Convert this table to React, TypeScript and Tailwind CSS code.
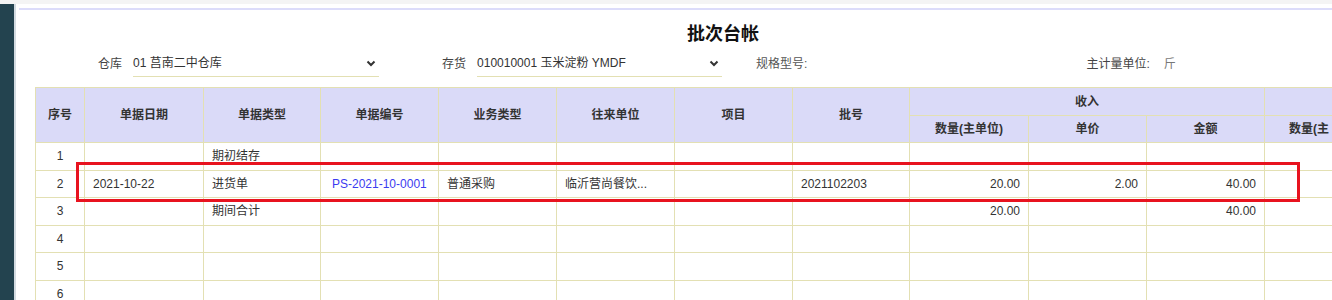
import React from 'react';

const cols = [49, 119, 117, 118, 118, 118, 118, 117, 119, 118, 118, 118, 118, 118];

const font = { fontFamily: '"Liberation Sans", "Noto Sans CJK SC", sans-serif' };

type Row = {
  no: number;
  date?: string;
  type?: string;
  code?: string;
  biz?: string;
  partner?: string;
  project?: string;
  batch?: string;
  qty?: string;
  price?: string;
  amount?: string;
};

const rows: Row[] = [
  { no: 1, type: '期初结存' },
  {
    no: 2,
    date: '2021-10-22',
    type: '进货单',
    code: 'PS-2021-10-0001',
    biz: '普通采购',
    partner: '临沂营尚餐饮...',
    batch: '2021102203',
    qty: '20.00',
    price: '2.00',
    amount: '40.00',
  },
  { no: 3, type: '期间合计', qty: '20.00', amount: '40.00' },
  { no: 4 },
  { no: 5 },
  { no: 6 },
  { no: 7 },
];

function Chevron() {
  return (
    <svg width="10" height="7" viewBox="0 0 10 7" className="shrink-0">
      <path d="M1.5 1.5 L5 5 L8.5 1.5" fill="none" stroke="#333" strokeWidth="2" />
    </svg>
  );
}

function Select({ value, width }: { value: string; width: string }) {
  return (
    <div className={`${width} flex items-center justify-between pb-[5px] pr-[3px] border-b border-[#e3e0b3] text-[#333]`}>
      <span>{value}</span>
      <Chevron />
    </div>
  );
}

const th = 'border border-[#e3e0b3] bg-[#dadaf8] font-bold text-[#333] text-center whitespace-nowrap';
const td = 'border border-[#e3e0b3] px-[8px] whitespace-nowrap overflow-hidden';

export default function App() {
  return (
    <div className="relative w-full h-[300px] overflow-hidden bg-white text-[12px]" style={font}>
      <div className="h-[4px] bg-[#f4f4f4]" />
      <div className="flex h-[296px]">
        <div className="w-[14px] shrink-0 bg-[#23434f] border-r-2 border-[#d3dbe1] box-content" />
        <div className="flex-1 min-w-0 pl-[3px]">
          <div className="mt-[4px] border-t-2 border-[#dcdcfa]">
            <h1 className="ml-[668px] mt-[12px] h-[24px] leading-[24px] text-[18px] font-bold text-[#111]">批次台帐</h1>

            <div className="mt-[9px] flex h-[22px] items-stretch text-[#444]">
              <div className="ml-[79px] flex items-center pb-[5px]">仓库</div>
              <div className="ml-[11px] flex">
                <Select value="01 莒南二中仓库" width="w-[246px]" />
              </div>
              <div className="ml-[63px] flex items-center pb-[5px]">存货</div>
              <div className="ml-[11px] flex">
                <Select value="010010001 玉米淀粉 YMDF" width="w-[245px]" />
              </div>
              <div className="ml-[34px] flex items-center pb-[5px] text-[#555]">规格型号:</div>
              <div className="ml-[279px] flex items-center pb-[5px] text-[#444]">主计量单位:</div>
              <div className="ml-[14px] flex items-center pb-[5px] text-[#777]">斤</div>
            </div>

            <table className="mt-[10px] ml-[16px] table-fixed border-collapse w-[1583px]">
              <colgroup>
                {cols.map((w, i) => (
                  <col key={i} style={{ width: w }} />
                ))}
              </colgroup>
              <thead>
                <tr className="h-[28px]">
                  <th rowSpan={2} className={th}>序号</th>
                  <th rowSpan={2} className={th}>单据日期</th>
                  <th rowSpan={2} className={th}>单据类型</th>
                  <th rowSpan={2} className={th}>单据编号</th>
                  <th rowSpan={2} className={th}>业务类型</th>
                  <th rowSpan={2} className={th}>往来单位</th>
                  <th rowSpan={2} className={th}>项目</th>
                  <th rowSpan={2} className={th}>批号</th>
                  <th colSpan={3} className={th}>收入</th>
                  <th colSpan={3} className={th} />
                </tr>
                <tr className="h-[27px]">
                  <th className={th}>数量(主单位)</th>
                  <th className={th}>单价</th>
                  <th className={th}>金额</th>
                  <th className={`${th} text-left pl-[24px]`}>数量(主</th>
                  <th className={th} />
                  <th className={th} />
                </tr>
              </thead>
              <tbody className="text-[#333]">
                {rows.map((r) => (
                  <tr key={r.no} className="h-[27.5px]">
                    <td className={`${td} text-center`}>{r.no}</td>
                    <td className={td}>{r.date}</td>
                    <td className={td}>{r.type}</td>
                    <td className={`${td} pl-[11px] text-[#3b3bf0]`}>{r.code}</td>
                    <td className={td}>{r.biz}</td>
                    <td className={td}>{r.partner}</td>
                    <td className={td}>{r.project}</td>
                    <td className={td}>{r.batch}</td>
                    <td className={`${td} text-right`}>{r.qty}</td>
                    <td className={`${td} text-right`}>{r.price}</td>
                    <td className={`${td} text-right`}>{r.amount}</td>
                    <td className={td} />
                    <td className={td} />
                    <td className={td} />
                  </tr>
                ))}
              </tbody>
            </table>
          </div>
        </div>
      </div>

      <div className="absolute left-[76px] top-[162px] w-[1224px] h-[40px] border-[3px] border-[#e8131f] pointer-events-none" />
    </div>
  );
}
